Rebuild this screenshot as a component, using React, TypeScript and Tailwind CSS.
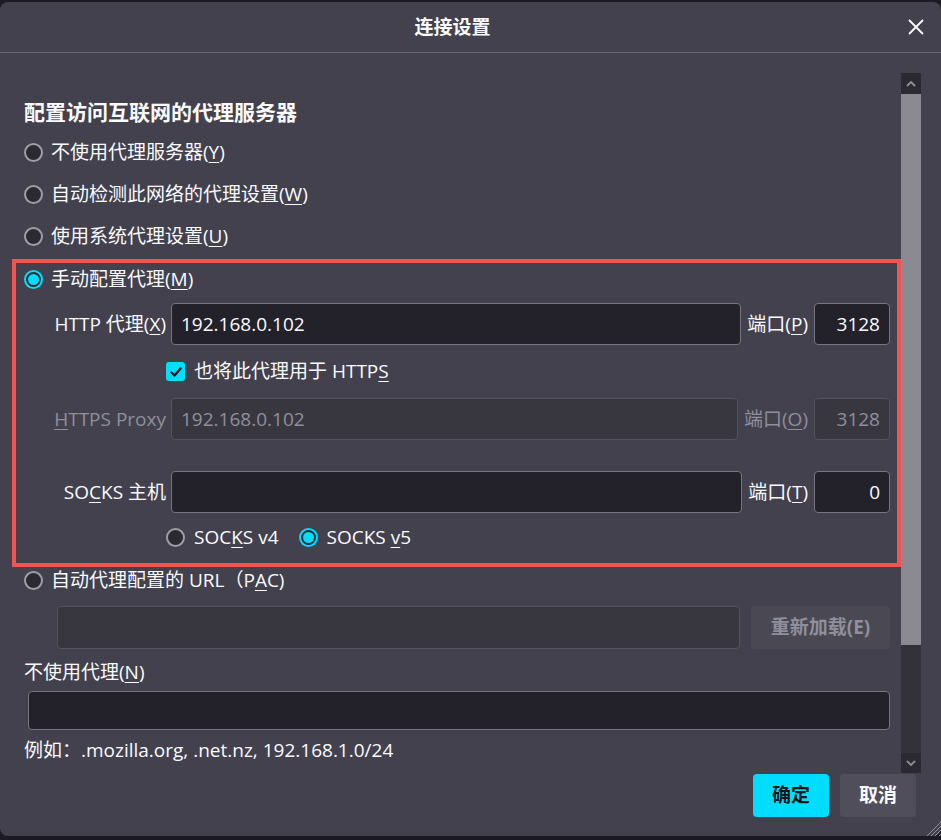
import React from 'react';
import clsx from 'clsx';

const Radio = ({ checked }: { checked?: boolean }) =>
  checked ? (
    <span className="flex h-[19px] w-[19px] shrink-0 items-center justify-center rounded-full bg-[#00ddff]">
      <span className="h-[15px] w-[15px] rounded-full border-2 border-[#2b2a33] bg-[#00ddff]" />
    </span>
  ) : (
    <span className="h-[19px] w-[19px] shrink-0 rounded-full border-2 border-[#9f9ea6] bg-[#2b2a33]" />
  );

const Field = ({
  value,
  disabled,
  right,
  className,
}: {
  value?: string;
  disabled?: boolean;
  right?: boolean;
  className?: string;
}) => (
  <div
    className={clsx(
      'flex items-center rounded-[4px] border px-[9px]',
      right && 'justify-end',
      disabled
        ? 'border-[#55545d] bg-[#38373f] text-[#8f8f9d]'
        : 'border-[#77767e] bg-[#23222b] text-[#fbfbfe]',
      className
    )}
  >
    {value}
  </div>
);

const Key = ({ children }: { children: React.ReactNode }) => (
  <span className="underline underline-offset-[3px]">{children}</span>
);

export default function App() {
  return (
    <div className="h-[840px] w-[941px] overflow-hidden bg-[#1c1b22] pt-[2px] font-['Open_Sans','Noto_Sans_CJK_SC',sans-serif] text-[19px] text-[#fbfbfe]">
      <div className="relative flex h-[834px] flex-col rounded-[8px] bg-[#42414d]">
        {/* header */}
        <div className="flex h-[51px] shrink-0 items-center border-b border-[#6b6a73]">
          <div className="flex-1 text-center text-[19px] font-bold">连接设置</div>
          <div className="flex w-[36px] items-center pl-[3px]">
            <svg width="16" height="16" viewBox="0 0 16 16" fill="none" stroke="#fbfbfe" strokeWidth="1.8">
              <path d="M1 1 L15 15 M15 1 L1 15" />
            </svg>
          </div>
        </div>

        {/* body */}
        <div className="flex h-[720px] shrink-0">
          <div className="flex w-[901px] flex-col">
            <div className="ml-[24px] mt-[46px] flex h-[28px] items-center text-[21px] font-bold">
              配置访问互联网的代理服务器
            </div>
            <div className="mt-[4px] flex h-[42px] items-center gap-[8px] pl-[24px]">
              <Radio />
              <span>
                不使用代理服务器(<Key>Y</Key>)
              </span>
            </div>
            <div className="flex h-[42px] items-center gap-[8px] pl-[24px]">
              <Radio />
              <span>
                自动检测此网络的代理设置(<Key>W</Key>)
              </span>
            </div>
            <div className="flex h-[43px] items-center gap-[8px] pl-[24px]">
              <Radio />
              <span>
                使用系统代理设置(<Key>U</Key>)
              </span>
            </div>

            {/* highlighted manual proxy block */}
            <div className="ml-[12px] mt-[1px] flex h-[308px] flex-col border-4 border-[#f55252] pr-[7px]">
              <div className="flex h-[32px] items-center gap-[8px] pl-[8px]">
                <Radio checked />
                <span>
                  手动配置代理(<Key>M</Key>)
                </span>
              </div>
              <div className="mt-[8px] flex h-[42px] items-center">
                <span className="w-[150px] shrink-0 text-right">
                  HTTP 代理(<Key>X</Key>)
                </span>
                <Field value="192.168.0.102" className="ml-[5px] h-[42px] flex-1" />
                <span className="px-[6px]">
                  端口(<Key>P</Key>)
                </span>
                <Field value="3128" right className="h-[42px] w-[76px]" />
              </div>
              <div className="flex h-[53px] items-center gap-[9px] pl-[150px]">
                <span className="flex h-[19px] w-[19px] items-center justify-center rounded-[3px] bg-[#00ddff]">
                  <svg width="14" height="14" viewBox="0 0 14 14" fill="none" stroke="#15141a" strokeWidth="2.4" strokeLinecap="round" strokeLinejoin="round">
                    <path d="M2.5 7.5 L5.5 10.5 L11.5 3.5" />
                  </svg>
                </span>
                <span>
                  也将此代理用于 HTTP<Key>S</Key>
                </span>
              </div>
              <div className="flex h-[42px] items-center text-[#8f8f9d]">
                <span className="w-[150px] shrink-0 text-right">
                  <Key>H</Key>TTPS Proxy
                </span>
                <Field value="192.168.0.102" disabled className="ml-[5px] h-[42px] flex-1" />
                <span className="px-[6px]">
                  端口(<Key>O</Key>)
                </span>
                <Field value="3128" disabled right className="h-[42px] w-[76px]" />
              </div>
              <div className="mt-[31px] flex h-[42px] items-center">
                <span className="w-[150px] shrink-0 text-right">
                  SO<Key>C</Key>KS 主机
                </span>
                <Field className="ml-[5px] h-[42px] flex-1" />
                <span className="px-[6px]">
                  端口(<Key>T</Key>)
                </span>
                <Field value="0" right className="h-[42px] w-[76px]" />
              </div>
              <div className="flex h-[48px] items-center pl-[150px]">
                <Radio />
                <span className="ml-[9px]">
                  SOC<Key>K</Key>S v4
                </span>
                <span className="ml-[20px]">
                  <Radio checked />
                </span>
                <span className="ml-[9px]">
                  SOCKS <Key>v</Key>5
                </span>
              </div>
            </div>

            <div className="flex h-[26px] items-center gap-[8px] pl-[24px]">
              <Radio />
              <span>
                自动代理配置的 URL（P<Key>A</Key>C)
              </span>
            </div>
            <div className="ml-[57px] mr-[11px] mt-[13px] flex h-[43px] gap-[11px]">
              <Field disabled className="h-[43px] flex-1" />
              <div className="flex w-[139px] items-center justify-center rounded-[4px] bg-[#4a4953] font-bold text-[#8f8f9d]">
                重新加载(E)
              </div>
            </div>
            <div className="ml-[24px] mt-[7px] flex h-[32px] items-center">
              <span>
                不使用代理(<Key>N</Key>)
              </span>
            </div>
            <Field className="ml-[28px] mr-[11px] mt-[3px] h-[39px]" />
            <div className="ml-[24px] flex h-[40px] items-center">
              例如：.mozilla.org, .net.nz, 192.168.1.0/24
            </div>
          </div>

          {/* scrollbar */}
          <div className="mt-[20px] flex h-[700px] w-[20px] flex-col">
            <div className="flex h-[21px] items-center justify-center bg-[#2b2a33]">
              <svg width="10" height="7" viewBox="0 0 10 7" fill="none" stroke="#8f8f9d" strokeWidth="1.8">
                <path d="M1 6 L5 2 L9 6" />
              </svg>
            </div>
            <div className="h-[551px] bg-[#8b8a92]" />
            <div className="h-[108px] bg-[#33323b]" />
            <div className="flex h-[20px] items-center justify-center bg-[#2b2a33]">
              <svg width="10" height="7" viewBox="0 0 10 7" fill="none" stroke="#8f8f9d" strokeWidth="1.8">
                <path d="M1 1 L5 5 L9 1" />
              </svg>
            </div>
          </div>
        </div>

        {/* footer */}
        <div className="flex justify-end gap-[11px] pr-[25px] pt-[1px]">
          <div className="flex h-[43px] w-[76px] items-center justify-center rounded-[4px] bg-[#00ddff] font-bold text-[#15141a]">
            确定
          </div>
          <div className="flex h-[43px] w-[76px] items-center justify-center rounded-[4px] bg-[#4f4e5a] font-bold text-[#fbfbfe]">
            取消
          </div>
        </div>

        <svg className="absolute bottom-0 right-0" width="16" height="16" viewBox="0 0 16 16" stroke="#8f8f9d" strokeWidth="1">
          <path d="M16 2 L2 16 M16 6 L6 16 M16 10 L10 16 M16 14 L14 16" />
        </svg>
      </div>
    </div>
  );
}
